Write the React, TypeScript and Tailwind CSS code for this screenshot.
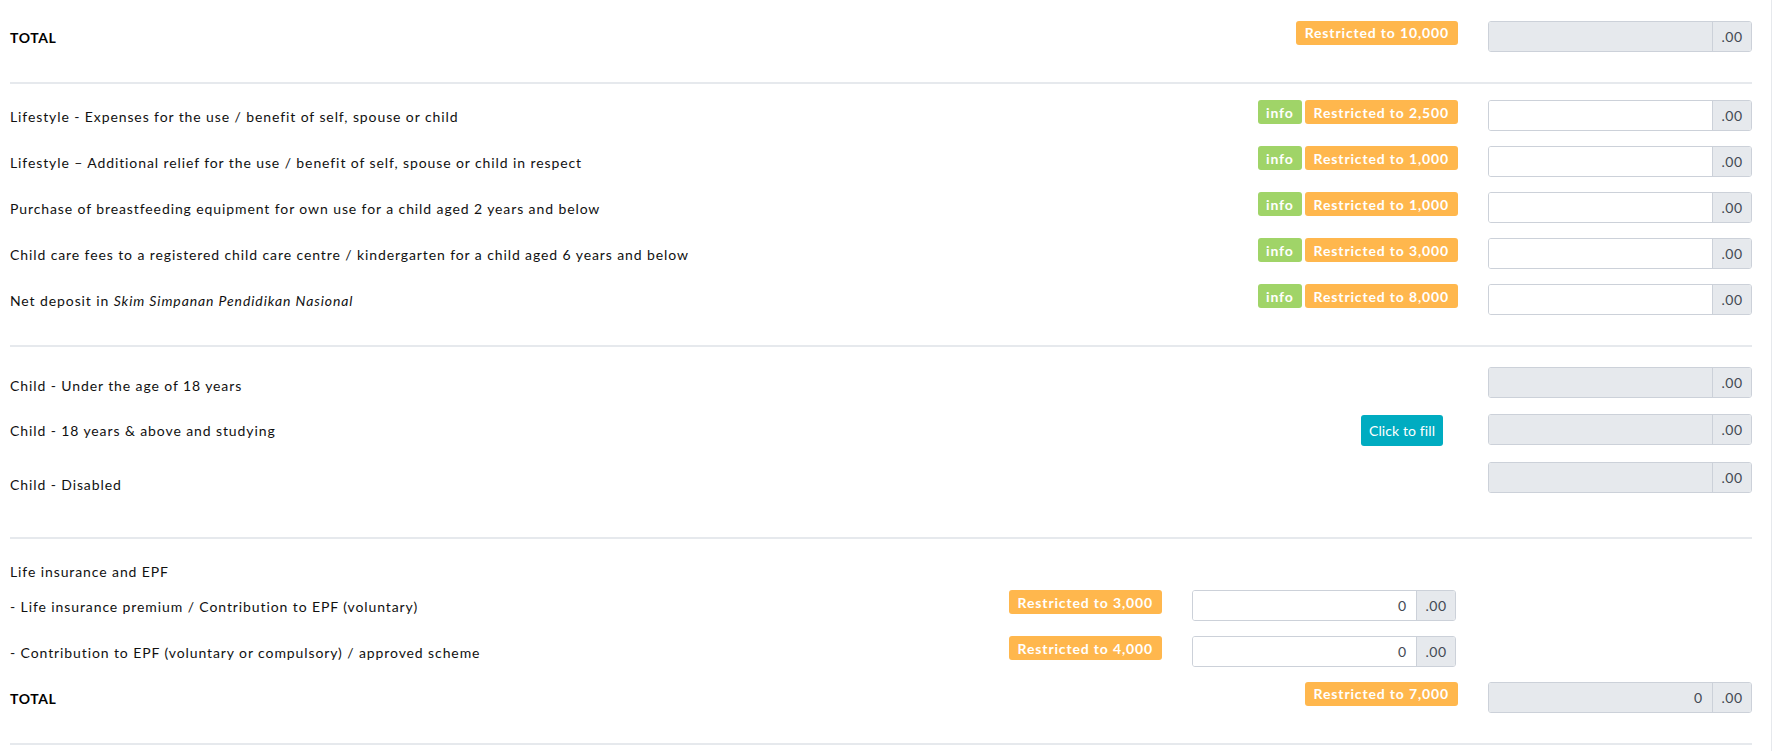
import type { ReactNode } from 'react';

const font = { fontFamily: 'Lato, "Open Sans", sans-serif' };

function Restricted({ amount }: { amount: string }) {
  return (
    <span className="inline-flex h-[24px] items-center rounded-[3px] bg-[#ffb74d] px-[9px] text-[14px] font-bold tracking-[0.85px] text-white">
      Restricted to {amount}
    </span>
  );
}

function Info() {
  return (
    <span className="inline-flex h-[24px] items-center rounded-[3px] bg-[#a0d468] px-[8px] text-[14px] font-bold tracking-[0.85px] text-white">
      info
    </span>
  );
}

function MoneyInput({ disabled, value }: { disabled?: boolean; value?: string }) {
  return (
    <div className="flex h-[31px] w-[264px] overflow-hidden rounded-[3px] border border-[#ccd1d9]">
      <div
        className={`flex flex-1 items-center justify-end px-[10px] text-[14px] text-[#434a54] ${
          disabled ? 'bg-[#e6e9ed]' : 'bg-white'
        }`}
      >
        {value}
      </div>
      <div className="flex w-[39px] items-center justify-center border-l border-[#ccd1d9] bg-[#e6e9ed] text-[14px] tracking-[0.5px] text-[#434a54]">
        .00
      </div>
    </div>
  );
}

function Row({
  label,
  badges,
  input,
  labelOffset = 9,
  sub,
}: {
  label: ReactNode;
  badges?: ReactNode;
  input?: ReactNode;
  labelOffset?: number;
  sub?: boolean;
}) {
  return (
    <div className="flex items-start">
      <div
        className="flex-1 text-[14px] leading-[16px] tracking-[0.9px] text-[#111]"
        style={{ paddingTop: labelOffset }}
      >
        {label}
      </div>
      <div className="flex items-start gap-[3px]">{badges}</div>
      <div className="ml-[30px]">{input}</div>
      {sub && <div className="w-[296px]" />}
    </div>
  );
}

function Separator({ className = '' }: { className?: string }) {
  return <div className={`h-[2px] bg-[#e6e9ed] ${className}`} />;
}

const Total = () => <span className="font-bold tracking-[0.6px] text-black">TOTAL</span>;

export default function App() {
  return (
    <div className="min-h-[751px] w-[1772px] border-r border-[#e6e9ed] bg-white" style={font}>
      <div className="ml-[10px] w-[1742px] pt-[21px]">
        <Row
          label={<Total />}
          badges={
            <div className="-mt-[1px]">
              <Restricted amount="10,000" />
            </div>
          }
          input={<MoneyInput disabled />}
        />
        <Separator className="mt-[30px]" />

        <div className="mt-[16px] flex flex-col gap-[15px]">
          <Row
            label="Lifestyle - Expenses for the use / benefit of self, spouse or child"
            badges={
              <>
                <Info />
                <Restricted amount="2,500" />
              </>
            }
            input={<MoneyInput />}
          />
          <Row
            label="Lifestyle – Additional relief for the use / benefit of self, spouse or child in respect"
            badges={
              <>
                <Info />
                <Restricted amount="1,000" />
              </>
            }
            input={<MoneyInput />}
          />
          <Row
            label="Purchase of breastfeeding equipment for own use for a child aged 2 years and below"
            badges={
              <>
                <Info />
                <Restricted amount="1,000" />
              </>
            }
            input={<MoneyInput />}
          />
          <Row
            label="Child care fees to a registered child care centre / kindergarten for a child aged 6 years and below"
            badges={
              <>
                <Info />
                <Restricted amount="3,000" />
              </>
            }
            input={<MoneyInput />}
          />
          <Row
            label={
              <>
                Net deposit in <em>Skim Simpanan Pendidikan Nasional</em>
              </>
            }
            badges={
              <>
                <Info />
                <Restricted amount="8,000" />
              </>
            }
            input={<MoneyInput />}
          />
        </div>
        <Separator className="mt-[30px]" />

        <div className="mt-[20px] flex flex-col gap-[16px]">
          <Row label="Child - Under the age of 18 years" input={<MoneyInput disabled />} labelOffset={11} />
          <Row
            label="Child - 18 years & above and studying"
            badges={
              <button className="mr-[15px] mt-[1px] h-[31px] w-[82px] rounded-[3px] bg-[#00acc1] text-[14px] tracking-[0.1px] text-white">
                Click to fill
              </button>
            }
            input={<MoneyInput disabled />}
          />
          <Row label="Child - Disabled" input={<MoneyInput disabled />} labelOffset={15} />
        </div>
        <Separator className="mt-[44px]" />

        <div className="mt-[25px] text-[14px] leading-[16px] tracking-[0.9px] text-[#111]">
          Life insurance and EPF
        </div>
        <div className="mt-[10px] flex flex-col gap-[15px]">
          <Row
            label="- Life insurance premium / Contribution to EPF (voluntary)"
            badges={<Restricted amount="3,000" />}
            input={<MoneyInput value="0" />}
            sub
          />
          <Row
            label="- Contribution to EPF (voluntary or compulsory) / approved scheme"
            badges={<Restricted amount="4,000" />}
            input={<MoneyInput value="0" />}
            sub
          />
          <Row
            label={<Total />}
            badges={
              <div className="-mt-[1px]">
                <Restricted amount="7,000" />
              </div>
            }
            input={<MoneyInput disabled value="0" />}
          />
        </div>
        <Separator className="mt-[30px]" />
      </div>
    </div>
  );
}
